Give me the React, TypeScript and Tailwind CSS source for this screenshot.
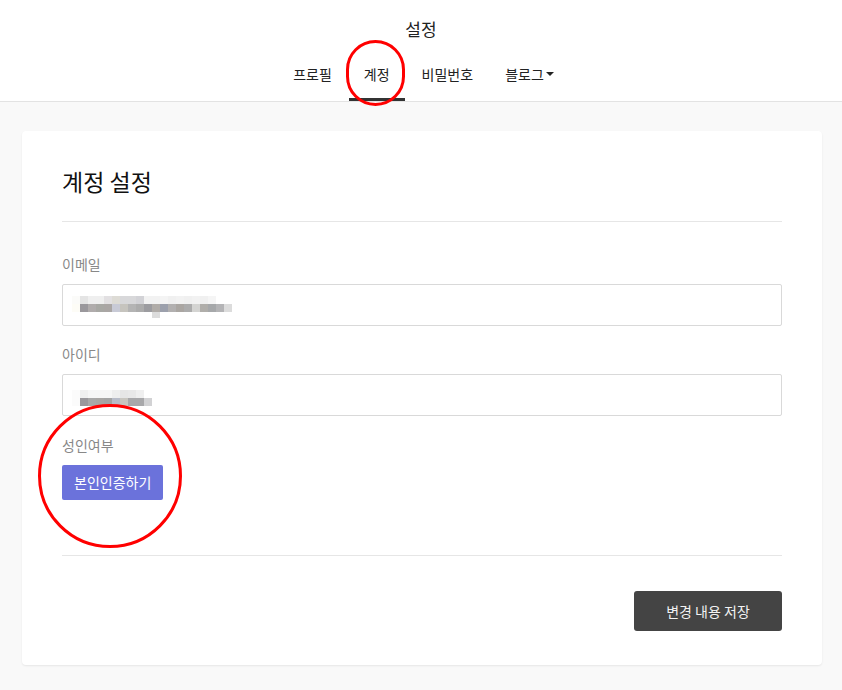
import React from "react";

const emailTop = ["#fbfbf9", "#e4e4e4", "#efefef", "#efefef", "#e2e0e2", "#dddbd5", "#d8d8da", "#d8d8da", "#d2d2d6", "#f2f2f2", "#f2f2f2", "#f4f4f4", "#f0f0f0", "#f2f2f2", "#f0f0f0", "#f2f2f2", "#f0f0f0", "#f5f5f5"];
const emailBot = ["#fdfcf6", "#9a989c", "#b0acac", "#a8a8a4", "#aaa6a4", "#c8cad6", "#c6c4be", "#b4b4b4", "#acacac", "#9c9ca0", "#b0aca8", "#9ca0ac", "#b2b0b0", "#aaa6a2", "#acacac", "#d4d4d2", "#b0aeaa", "#a6a8aa", "#b4b4b6", "#dcdcdc"];
const idTop = ["#fbfbfb", "#f0f0f0", "#f6f6f6", "#f6f6f6", "#f6f6f6", "#eeeeee", "#e6e6e6", "#e8e8e8", "#efefef"];
const idBot = ["#fbfbfb", "#9a989c", "#a8a8a8", "#a8a6a4", "#a4a4a4", "#b8bcc8", "#c8c6c0", "#a8a8aa", "#a8a8aa", "#d2d2d4"];

const Pixels: React.FC<{ top: string[]; bot: string[]; extra?: number }> = ({ top, bot, extra }) => (
  <div className="flex flex-col">
    <div className="flex">
      {top.map((c, i) => (
        <div key={i} className="w-2 h-2" style={{ backgroundColor: c }} />
      ))}
    </div>
    <div className="flex">
      {bot.map((c, i) => (
        <div key={i} className="w-2 h-2" style={{ backgroundColor: c }} />
      ))}
    </div>
    {extra !== undefined && (
      <div className="flex">
        <div className="h-[6px]" style={{ width: extra * 8 }} />
        <div className="w-2 h-[6px] bg-[#dcdcdc]" />
      </div>
    )}
  </div>
);

const App: React.FC = () => {
  return (
    <div
      className="relative min-h-screen bg-[#f9f9f9] text-[#222]"
      style={{ fontFamily: '"Noto Sans CJK KR", "Noto Sans", sans-serif' }}
    >
      {/* Header */}
      <div className="bg-white border-b border-[#e3e3e3]">
        <div className="h-[49px] flex items-end justify-center pb-[12px]">
          <h1 className="text-[17px] leading-none text-[#222]">설정</h1>
        </div>
        <nav className="flex justify-center gap-[2px] pl-[6px] text-[14px] text-[#222]">
          <a className="px-[15px] pt-[15px] pb-[13px] border-b-[3px] border-transparent">프로필</a>
          <a className="px-[15px] pt-[15px] pb-[13px] border-b-[3px] border-[#333]">계정</a>
          <a className="px-[15px] pt-[15px] pb-[13px] border-b-[3px] border-transparent">비밀번호</a>
          <a className="px-[15px] pt-[15px] pb-[13px] border-b-[3px] border-transparent flex items-start gap-[2px]">
            블로그
            <svg width="9" height="14" viewBox="0 0 9 14" className="mt-[2px]">
              <path d="M0 6 L8 6 L4 10 Z" fill="#222" />
            </svg>
          </a>
        </nav>
      </div>

      {/* Card */}
      <div className="pl-[22px] pr-[20px] pt-[29px] pb-[24px]">
        <div className="bg-white rounded-[4px] shadow-[0_1px_2px_rgba(0,0,0,0.08)] px-[40px] pt-[35px] pb-[34px]">
          <h2 className="text-[23px] leading-[30px] text-[#111]">계정 설정</h2>
          <div className="mt-[25px] border-t border-[#e6e6e6]" />

          <div className="mt-[32px]">
            <label className="block text-[14px] leading-[20px] text-[#888]">이메일</label>
            <div className="mt-[10px] h-[42px] border border-[#d9d9d9] rounded-[2px] flex items-center pl-[9px]">
              <div className="mt-[4px]">
                <Pixels top={emailTop} bot={emailBot} extra={10} />
              </div>
            </div>
          </div>

          <div className="mt-[18px]">
            <label className="block text-[14px] leading-[20px] text-[#888]">아이디</label>
            <div className="mt-[10px] h-[42px] border border-[#d9d9d9] rounded-[2px] flex items-center pl-[9px]">
              <div className="mt-[6px]">
                <Pixels top={idTop} bot={idBot} />
              </div>
            </div>
          </div>

          <div className="mt-[19px]">
            <label className="block text-[14px] leading-[20px] text-[#888]">성인여부</label>
            <button className="mt-[10px] h-[35px] px-[12px] rounded-[2px] bg-[#6b72db] text-white text-[14px]">
              본인인증하기
            </button>
          </div>

          <div className="mt-[55px] border-t border-[#e6e6e6]" />

          <div className="mt-[35px] flex justify-end">
            <button className="w-[148px] h-[40px] rounded-[3px] bg-[#444] text-[#f2f2f2] text-[14px]">
              변경 내용 저장
            </button>
          </div>
        </div>
      </div>

      {/* Red annotation circles */}
      <div className="absolute left-[346px] top-[40px] w-[59px] h-[66px] rounded-full border-[3px] border-[#f00] pointer-events-none" />
      <div className="absolute left-[38px] top-[404px] w-[144px] h-[144px] rounded-full border-[3px] border-[#f00] pointer-events-none" />
    </div>
  );
};

export default App;
